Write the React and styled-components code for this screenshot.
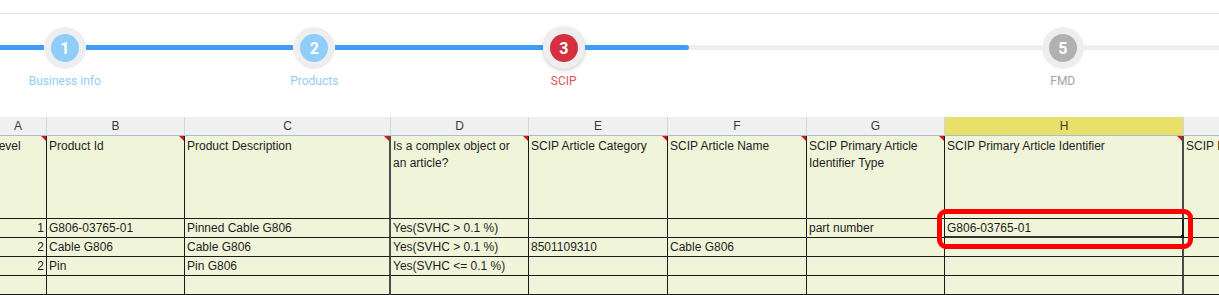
import React from "react"
import styled, { createGlobalStyle } from "styled-components"

const GlobalStyle = createGlobalStyle`
  html, body {
    margin: 0;
    padding: 0;
    background: #fff;
    overflow: hidden;
  }
  * { box-sizing: border-box; }
`

const BLUE = "#3f9ef3"
const TRACK = "#eeeeee"

const steps = [
  { n: 1, label: "Business info", state: "done" },
  { n: 2, label: "Products", state: "done" },
  { n: 3, label: "SCIP", state: "active", rightCap: true },
  { n: 4, label: "", state: "hidden" },
  { n: 5, label: "FMD", state: "todo" },
]

const columns = ["A", "B", "C", "D", "E", "F", "G", "H", "I"]

const headers = [
  "Level",
  "Product Id",
  "Product Description",
  "Is a complex object or an article?",
  "SCIP Article Category",
  "SCIP Article Name",
  "SCIP Primary Article Identifier Type",
  "SCIP Primary Article Identifier",
  "SCIP Primary Article Identifier Value",
]

const rows = [
  ["1", "G806-03765-01", "Pinned Cable G806", "Yes(SVHC > 0.1 %)", "", "", "part number", "G806-03765-01", ""],
  ["2", "Cable G806", "Cable G806", "Yes(SVHC > 0.1 %)", "8501109310", "Cable G806", "", "", ""],
  ["2", "Pin", "Pin G806", "Yes(SVHC <= 0.1 %)", "", "", "", "", ""],
  ["", "", "", "", "", "", "", "", ""],
]

const App = () => {
  return (
    <Page>
      <GlobalStyle />
      <Card>
        <Stepper>
          {steps.map((s, i) => {
            const leftDone = i <= 2
            const rightDone = i < 2 || s.rightCap
            return (
              <Step key={s.n}>
                <Rail>
                  <HalfLine color={leftDone ? BLUE : TRACK} />
                  {s.state === "hidden" ? (
                    <Gap />
                  ) : (
                    <Ring active={s.state === "active"}>
                      <Dot state={s.state}>{s.n}</Dot>
                    </Ring>
                  )}
                  <HalfLine color={rightDone ? BLUE : TRACK} cap={s.rightCap} />
                </Rail>
                <StepLabel state={s.state}>{s.label}</StepLabel>
              </Step>
            )
          })}
          <Tail />
        </Stepper>
      </Card>

      <Sheet>
        {columns.map((c) => (
          <ColHead key={c} selected={c === "H"}>
            {c}
          </ColHead>
        ))}
        {headers.map((h, i) => (
          <HeadCell key={h} thick={i === 2 || i === 7}>
            {h}
          </HeadCell>
        ))}
        {rows.map((r, ri) =>
          r.map((v, ci) => {
            const selected = ri === 0 && ci === 7
            return (
              <Cell
                key={ri + "-" + ci}
                align={ci === 0 ? "right" : "left"}
                thick={ci === 2 || ci === 7}
                selected={selected}
              >
                {v}
                {selected && (
                  <>
                    <FillHandle />
                    <Callout />
                  </>
                )}
              </Cell>
            )
          })
        )}
      </Sheet>
    </Page>
  )
}

export default App

const Page = styled.div`
  width: 1219px;
  height: 295px;
  overflow: hidden;
  font-family: Roboto, "Liberation Sans", sans-serif;
`

const Card = styled.div`
  margin-top: 13px;
  border-top: 1px solid #e3e3e3;
  height: 104px;
`

const Stepper = styled.div`
  display: flex;
  margin-left: -60px;
  padding-top: 13px;
`

const Step = styled.div`
  flex: 0 0 249.5px;
  display: flex;
  flex-direction: column;
  align-items: center;
`

const Rail = styled.div`
  width: 100%;
  display: flex;
  align-items: center;
  height: 42px;
`

const HalfLine = styled.div`
  flex: 1;
  height: 5px;
  margin-top: -1px;
  background: ${(p) => p.color};
  border-radius: ${(p) => (p.cap ? "0 3px 3px 0" : "0")};
  box-shadow: ${(p) => (p.cap ? `6px 0 0 -1px ${TRACK}` : "none")};
`

const Tail = styled.div`
  flex: 1;
  align-self: flex-start;
  height: 5px;
  margin-top: 18px;
  background: ${TRACK};
`

const Gap = styled.div`
  width: 42px;
  height: 5px;
  margin-top: -1px;
  background: ${TRACK};
`

const Ring = styled.div`
  width: 42px;
  height: 42px;
  border-radius: 50%;
  background: #eeeeee;
  display: flex;
  align-items: center;
  justify-content: center;
  box-shadow: ${(p) => (p.active ? "0 1px 4px rgba(0,0,0,0.22)" : "none")};
`

const dotColors = {
  done: "#90cdf8",
  active: "#d5303f",
  todo: "#b1b1b1",
}

const Dot = styled.div`
  width: 28px;
  height: 28px;
  border-radius: 50%;
  background: ${(p) => dotColors[p.state]};
  color: #fff;
  font-weight: 700;
  font-size: 16px;
  display: flex;
  align-items: center;
  justify-content: center;
`

const labelColors = {
  done: "#93cdf7",
  active: "#de5262",
  todo: "#a3a3a3",
  hidden: "transparent",
}

const StepLabel = styled.div`
  margin-top: 5px;
  height: 14px;
  font-size: 12px;
  line-height: 14px;
  color: ${(p) => labelColors[p.state]};
`

const Sheet = styled.div`
  display: grid;
  grid-template-columns: 57px 138px 206px 138px 139px 139px 138px 239px 300px;
  grid-template-rows: 19px 83px repeat(4, 19px);
  margin-left: -10px;
  font-family: "Liberation Sans", Arial, sans-serif;
  font-size: 12px;
  color: #1e1e1e;
`

const ColHead = styled.div`
  background: ${(p) => (p.selected ? "#e9e06a" : "#f0f0f0")};
  border-right: 1px solid #c9d6e6;
  border-bottom: 1px solid #a9bdd6;
  text-align: center;
  line-height: 19px;
  color: #3a3a3a;
`

const HeadCell = styled.div`
  position: relative;
  background: #f0f4d9;
  border-right: ${(p) => (p.thick ? "2px solid #4a4a4a" : "1px solid #1a1a1a")};
  border-bottom: 1px solid #1a1a1a;
  padding: 2px 2px 0 2px;
  line-height: 17px;
  white-space: normal;

  &::after {
    content: "";
    position: absolute;
    top: 0;
    right: 0;
    border-style: solid;
    border-width: 0 5px 5px 0;
    border-color: transparent #e01010 transparent transparent;
  }
`

const Cell = styled.div`
  position: relative;
  background: #f0f4d9;
  border-right: ${(p) =>
    p.selected ? "2px solid #222" : p.thick ? "2px solid #4a4a4a" : "1px solid #1a1a1a"};
  border-bottom: ${(p) => (p.selected ? "2px solid #333" : "1px solid #1a1a1a")};
  padding: 0 2px;
  line-height: 19px;
  text-align: ${(p) => p.align};
  white-space: nowrap;
`

const FillHandle = styled.span`
  position: absolute;
  right: -3px;
  bottom: -3px;
  width: 4px;
  height: 4px;
  background: #111;
`

const Callout = styled.span`
  position: absolute;
  left: -8px;
  top: -10px;
  width: 256px;
  height: 40px;
  border: 5px solid #ff0000;
  border-radius: 9px;
  z-index: 2;
  pointer-events: none;
`
